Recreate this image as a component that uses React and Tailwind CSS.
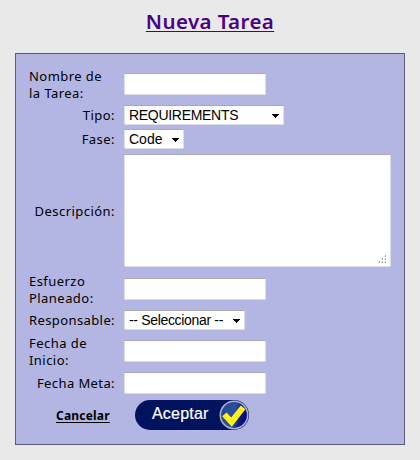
import React from "react";

const labelFont = "font-['Noto_Sans',sans-serif] text-black whitespace-nowrap";
const field =
  "block rounded-[2px] border border-[#dcdee8] border-t-[#a9a9b4] bg-white outline-none";

function Row({ label, className, children }) {
  return (
    <div className={"flex items-center " + className}>
      <div className="flex w-[86px] shrink-0 justify-end pt-px">{label}</div>
      <div className="ml-[9px]">{children}</div>
    </div>
  );
}

function Label({ children, className = "tracking-[0.45px]" }) {
  return (
    <span className={labelFont + " block text-[13px] leading-[17px] " + className}>{children}</span>
  );
}

function Select({ value, className, textClass = "" }) {
  return (
    <button
      type="button"
      className={
        field +
        " flex h-[20px] items-center justify-between pl-[4px] pr-[4px] font-['Liberation_Sans',Arial,sans-serif] text-[14px] leading-[18px] text-black " +
        className
      }
    >
      <span className={"whitespace-nowrap " + textClass}>{value}</span>
      <svg width="7" height="4" viewBox="0 0 7 4" className="mt-px block" shapeRendering="crispEdges">
        <path d="M0 0H7V1H6V2H5V3H4V4H3V3H2V2H1V1H0Z" fill="#000" />
      </svg>
    </button>
  );
}

function TextInput() {
  return <input type="text" className={field + " h-[22px] w-[142px]"} />;
}

function AcceptButton() {
  return (
    <button
      type="button"
      className="relative flex h-[30px] w-[114px] items-center rounded-full bg-[#00135f] pl-[17px] font-['Liberation_Sans',Arial,sans-serif] text-[16px] leading-[20px] text-white"
    >
      <span className="-mt-[2px] tracking-[0.2px] [-webkit-text-stroke:0.2px_white]">Aceptar</span>
      <svg className="absolute right-0 top-0" width="30" height="30" viewBox="0 0 30 30">
        <defs>
          <linearGradient id="badge" x1="0" y1="0.4" x2="1" y2="0.6">
            <stop offset="0" stopColor="#244a92" />
            <stop offset="0.5" stopColor="#2b4f9f" />
            <stop offset="0.75" stopColor="#10157f" />
            <stop offset="1" stopColor="#05057c" />
          </linearGradient>
        </defs>
        <circle cx="15" cy="15" r="13.7" fill="url(#badge)" stroke="#a9b0cc" strokeWidth="1.6" />
        <path d="M3.2 16.2 7.6 12.4 12.2 17.4 21.8 5.6 26.4 9.2 12.8 26.8Z" fill="#fff01e" />
      </svg>
    </button>
  );
}

export default function App() {
  return (
    <div className="flex h-[460px] w-[420px] flex-col items-center bg-[#e9e9e9]">
      <h1 className="mt-[6px] flex h-[30px] items-start font-['Noto_Sans',sans-serif] text-[20.5px] font-semibold leading-[30px] tracking-[0.4px] text-[#4b0082]">
        <a className="whitespace-nowrap underline decoration-[#4b0082] decoration-1 underline-offset-[2px]">Nueva Tarea</a>
      </h1>
      <form className="mt-[17px] h-[392px] w-[390px] border border-[#5c5c78] bg-[#b3b5e3] pl-[13px] pt-[13px]">
        <Row className="h-[34px]" label={<div className="w-[86px]"><Label>Nombre de</Label><Label>la Tarea:</Label></div>}>
          <TextInput />
        </Row>
        <Row className="mt-[4px] h-[20px]" label={<Label>Tipo:</Label>}>
          <Select value="REQUIREMENTS" className="w-[160px]" textClass="tracking-[-0.3px]" />
        </Row>
        <Row className="mt-[4px] h-[20px]" label={<Label>Fase:</Label>}>
          <Select value="Code" className="w-[60px]" />
        </Row>
        <Row className="mt-[5px] h-[113px]" label={<Label>Descripción:</Label>}>
          <div className="relative">
            <textarea className={field + " h-[113px] w-[267px] resize-none"} />
            <svg className="absolute bottom-[4px] right-[5px]" width="8" height="8" viewBox="0 0 8 8" shapeRendering="crispEdges">
              <path d="M7 0h1v2h-1zM4 3h1v2h-1zM7 3h1v2h-1zM1 6h1v2h-1zM4 6h1v2h-1zM7 6h1v2h-1z" fill="#aaa" />
              <path d="M6 1h1v1h-1zM3 4h1v1h-1zM6 4h1v1h-1zM0 7h1v1h-1zM3 7h1v1h-1zM6 7h1v1h-1z" fill="#ddd" />
            </svg>
          </div>
        </Row>
        <Row className="mt-[5px] h-[34px]" label={<div className="w-[86px]"><Label>Esfuerzo</Label><Label>Planeado:</Label></div>}>
          <TextInput />
        </Row>
        <Row className="mt-[4px] h-[20px]" label={<Label className="tracking-[0.4px]">Responsable:</Label>}>
          <Select value="-- Seleccionar --" className="w-[121px]" textClass="tracking-[-0.33px]" />
        </Row>
        <Row className="mt-[4px] h-[34px]" label={<div className="w-[86px]"><Label>Fecha de</Label><Label>Inicio:</Label></div>}>
          <TextInput />
        </Row>
        <Row className="mt-[4px] h-[22px]" label={<Label className="tracking-[0.4px]">Fecha Meta:</Label>}>
          <TextInput />
        </Row>
        <div className="mt-[6px] flex h-[30px] items-center">
          <a className="ml-[27px] w-[79px] whitespace-nowrap font-['Noto_Sans',sans-serif] text-[12px] font-bold leading-[17px] tracking-[0.2px] underline decoration-1 underline-offset-[2px]">
            Cancelar
          </a>
          <AcceptButton />
        </div>
      </form>
    </div>
  );
}
